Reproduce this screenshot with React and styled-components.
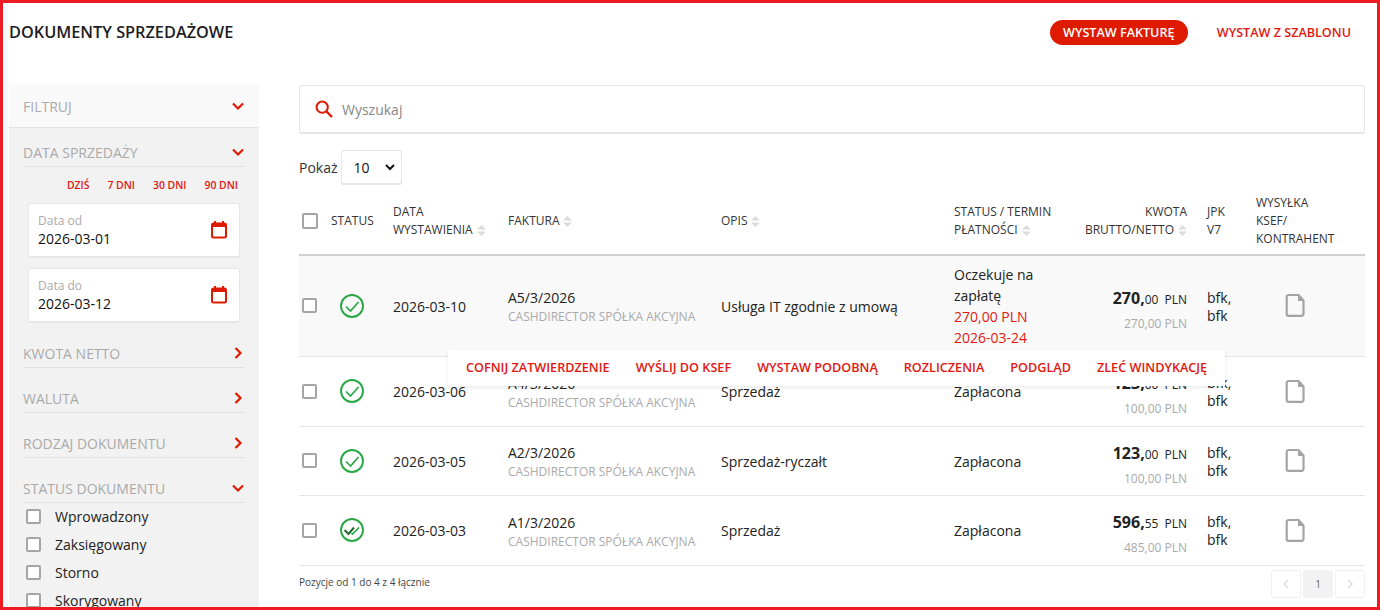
import styled, { createGlobalStyle } from "styled-components";

const RED = "#de1a00";
const TEXT_RED = "#e3170f";

const GlobalStyle = createGlobalStyle`
  html, body {
    margin: 0;
    padding: 0;
    background: #fff;
    overflow: hidden;
  }
  * {
    box-sizing: border-box;
  }
  body {
    font-family: "Open Sans", "Liberation Sans", sans-serif;
    color: #222;
    font-size: 14px;
  }
`;

const Frame = styled.div`
  width: 1380px;
  height: 610px;
  border: 3px solid #ec1c24;
  overflow: hidden;
  background: #fff;
  padding: 0 12px 0 6px;
`;

const TopBar = styled.header`
  height: 82px;
  padding-bottom: 24px;
  display: flex;
  align-items: center;
  justify-content: space-between;
`;

const Title = styled.h1`
  margin: 0;
  font-size: 16.3px;
  font-weight: 600;
  color: #1d1d1f;
  text-transform: uppercase;
`;

const TopActions = styled.div`
  display: flex;
  align-items: center;
  gap: 29px;
  padding-right: 14px;
`;

const PrimaryButton = styled.button`
  height: 25px;
  width: 138px;
  padding: 0;
  border: 0;
  border-radius: 13px;
  background: ${RED};
  color: #fff;
  font: 600 12.6px "Open Sans", sans-serif;
`;

const TextButton = styled.button`
  padding: 0;
  border: 0;
  background: none;
  color: ${TEXT_RED};
  font: 600 12.6px "Open Sans", sans-serif;
`;

const Columns = styled.div`
  display: flex;
  gap: 40px;
  align-items: flex-start;
`;

const Sidebar = styled.aside`
  width: 250px;
  flex: none;
  height: 530px;
  background: #f2f2f2;
`;

const FilterHead = styled.div`
  height: 43px;
  padding: 0 14px;
  background: #f9f9f9;
  border-bottom: 1px solid #e2e2e2;
  display: flex;
  align-items: center;
  justify-content: space-between;
  color: #aaa;
  font-size: 14px;
  font-weight: 400;
`;

const SideBody = styled.div`
  padding: 0 14px;
`;

const SectionHead = styled.div`
  height: 39px;
  margin-top: ${(p) => p.$top}px;
  padding-top: 10px;
  display: flex;
  align-items: center;
  justify-content: space-between;
  border-bottom: 1px solid #e2e2e2;
  color: #aaa;
  font-size: 14px;
`;

const Arrow = styled.svg`
  width: 14px;
  height: 14px;
  fill: none;
  stroke: ${RED};
  stroke-width: 2.2;
  flex: none;
`;

const QuickDates = styled.div`
  display: flex;
  justify-content: flex-end;
  gap: 18px;
  padding: 11px 7px 0 0;
  height: 36px;
  font-size: 10.4px;
  font-weight: 600;
  color: ${TEXT_RED};
`;

const DateList = styled.div`
  display: flex;
  flex-direction: column;
  gap: 10px;
`;

const DateCard = styled.div`
  width: 212px;
  height: 55px;
  margin-left: 5px;
  padding: 8px 11px 8px 9px;
  background: #fff;
  border: 1px solid #e6e6e6;
  border-bottom-width: 2px;
  border-radius: 3px;
  display: flex;
  align-items: center;
  justify-content: space-between;
`;

const DateText = styled.div`
  display: flex;
  flex-direction: column;
  font-size: 14px;
  line-height: 20px;
  color: #111;
  small {
    font-size: 12px;
    line-height: 17px;
    color: #aaa;
  }
`;

const Check = styled.span`
  display: block;
  flex: none;
  width: ${(p) => p.$size || 15}px;
  height: ${(p) => p.$size || 15}px;
  margin-left: ${(p) => p.$inset || 0}px;
  border: 2px solid #a5a5a5;
  border-radius: 2px;
  background: #fff;
`;

const RowCheck = styled(Check)`
  margin-bottom: 2px;
`;

const StatusList = styled.div`
  display: flex;
  flex-direction: column;
  padding-left: 3px;
`;

const StatusItem = styled.label`
  height: 28px;
  padding-bottom: 2px;
  display: flex;
  align-items: center;
  gap: 14px;
  font-size: 14px;
  color: #222;
`;

const Main = styled.main`
  flex: 1;
  min-width: 0;
`;

const SearchBox = styled.div`
  height: 49px;
  display: flex;
  align-items: center;
  gap: 9px;
  padding: 0 15px;
  border: 1px solid #e6e6e6;
  border-bottom-width: 2px;
  border-radius: 3px;
  color: #888;
  font-size: 14px;
`;

const ShowRow = styled.div`
  height: 35px;
  margin-top: 16px;
  display: flex;
  align-items: center;
  gap: 3px;
  font-size: 14px;
  color: #333;
`;

const PageSize = styled.div`
  width: 61px;
  height: 35px;
  padding: 0 6px 0 12px;
  display: flex;
  align-items: center;
  justify-content: space-between;
  border: 1px solid #e6e6e6;
  border-bottom-width: 2px;
  border-radius: 3px;
  color: #111;
`;

const Table = styled.table`
  width: 1066px;
  margin-top: 4px;
  table-layout: fixed;
  border-collapse: collapse;
`;

const Th = styled.th`
  height: 66px;
  padding: 0 ${(p) => (p.$right ? "20px" : "0")} 2px 0;
  border-bottom: 2px solid #cfcfcf;
  font-size: 12px;
  line-height: 18px;
  font-weight: 400;
  color: #333;
  text-align: ${(p) => (p.$right ? "right" : "left")};
  vertical-align: middle;
`;

const Sort = styled.svg`
  display: inline-block;
  width: 9px;
  height: 11px;
  margin-left: 4px;
  vertical-align: -2px;
  fill: #dcdcdc;
`;

const Row = styled.tr`
  background: ${(p) => (p.$active ? "#f9f9f9" : "#fff")};
`;

const Td = styled.td`
  height: ${(p) => p.$height}px;
  padding: 2px ${(p) => (p.$right ? "20px" : "0")} 0 0;
  border-bottom: 1px solid #e6e6e6;
  font-size: 14px;
  line-height: 20px;
  color: #222;
  text-align: ${(p) => (p.$right ? "right" : "left")};
  vertical-align: middle;
`;

const IconCell = styled.div`
  display: flex;
  padding: 0 0 2px ${(p) => p.$inset}px;
`;

const Invoice = styled.div`
  padding-top: 2px;
  line-height: 18px;
  small {
    display: block;
    margin-top: 1px;
    font-size: 12px;
    line-height: 18px;
    color: #aaa;
  }
`;

const StatusText = styled.div`
  padding-bottom: 2px;
  line-height: 21px;
  span {
    display: block;
    color: ${TEXT_RED};
  }
`;

const Amount = styled.div`
  padding-top: 8px;
  font-size: 12px;
  line-height: 18px;
  b {
    font-size: 16px;
    font-weight: 700;
    color: #222;
  }
  em {
    font-style: normal;
    margin-left: 6px;
  }
  small {
    display: block;
    margin-top: 6px;
    font-size: 12px;
    color: #aaa;
  }
`;

const Jpk = styled.div`
  line-height: 18px;
`;

const ActionBar = styled.div`
  position: absolute;
  left: 149px;
  top: 161px;
  width: 777px;
  height: 36px;
  padding: 0 0 2px 18px;
  display: flex;
  align-items: center;
  gap: 26px;
  background: #fff;
  box-shadow: 0 2px 4px rgba(0, 0, 0, 0.08);
  font-size: 12.65px;
  font-weight: 600;
  color: ${TEXT_RED};
  white-space: nowrap;
  z-index: 2;
`;

const TableWrap = styled.div`
  position: relative;
`;

const Footer = styled.div`
  height: 34px;
  padding-top: 2px;
  display: flex;
  align-items: center;
  justify-content: space-between;
  font-size: 10px;
  color: #444;
`;

const FooterNote = styled.span`
  padding-bottom: 4px;
`;

const Pager = styled.div`
  display: flex;
  gap: 2px;
`;

const PageBtn = styled.div`
  width: 30px;
  height: 28px;
  display: flex;
  align-items: center;
  justify-content: center;
  border: 1px solid ${(p) => (p.$current ? "#f2f2f2" : "#f0f0f0")};
  border-radius: 2px;
  background: ${(p) => (p.$current ? "#f2f2f2" : "#fff")};
  color: #666;
  font-size: 10px;
`;

const ChevronDown = () => (
  <Arrow viewBox="0 0 14 14">
    <path d="M2 4.5 7 9.5 12 4.5" />
  </Arrow>
);

const ChevronRight = () => (
  <Arrow viewBox="0 0 14 14">
    <path d="M4.5 2 9.5 7 4.5 12" />
  </Arrow>
);

const SortIcon = () => (
  <Sort viewBox="0 0 9 11">
    <path d="M4.5 0 9 4.5H0ZM0 6.5H9L4.5 11Z" />
  </Sort>
);

const CalendarIcon = () => (
  <svg width="18" height="20" viewBox="0 0 18 20">
    <path d="M5 1v3M13 1v3" stroke={RED} strokeWidth="2" fill="none" />
    <rect x="2" y="3.5" width="14" height="14" rx="1.5" fill="none" stroke={RED} strokeWidth="2" />
    <rect x="2" y="3.5" width="14" height="3.5" fill={RED} />
  </svg>
);

const StatusIcon = ({ double }) => (
  <svg width="24" height="24" viewBox="0 0 24 24" fill="none">
    <circle cx="12" cy="12" r="11" stroke="#27a844" strokeWidth="1.9" />
    {double ? (
      <>
        <path d="M4.5 12 8.5 16 14 9.5" stroke="#1f6b33" strokeWidth="2" />
        <path d="M11.5 15 12.5 16 19 9.5" stroke="#27a844" strokeWidth="1.6" />
      </>
    ) : (
      <path d="M6 12.5 10.5 17 18.5 8" stroke="#27a844" strokeWidth="1.7" />
    )}
  </svg>
);

const FileIcon = () => (
  <svg width="22" height="25" viewBox="0 0 22 25" fill="none">
    <path
      d="M3.5 2h10l5 5.5V21a1.8 1.8 0 0 1-1.8 1.8H3.5A1.8 1.8 0 0 1 1.7 21V3.8A1.8 1.8 0 0 1 3.5 2Z"
      stroke="#a4a4a4"
      strokeWidth="2.2"
    />
    <path d="M13 2v6h6" fill="#a4a4a4" />
  </svg>
);

const SearchIcon = () => (
  <svg width="18" height="18" viewBox="0 0 18 18" fill="none" stroke={RED} strokeWidth="2">
    <circle cx="7.2" cy="7.2" r="5.6" />
    <path d="M11.5 11.5 17 17" strokeWidth="2.4" />
  </svg>
);

const rows = [
  {
    date: "2026-03-10",
    invoice: "A5/3/2026",
    desc: "Usługa IT zgodnie z umową",
    gross: "270,",
    cents: "00",
    net: "270,00 PLN",
    height: 101,
    active: true,
  },
  {
    date: "2026-03-06",
    invoice: "A4/3/2026",
    desc: "Sprzedaż",
    status: "Zapłacona",
    gross: "123,",
    cents: "00",
    net: "100,00 PLN",
    height: 70,
  },
  {
    date: "2026-03-05",
    invoice: "A2/3/2026",
    desc: "Sprzedaż-ryczałt",
    status: "Zapłacona",
    gross: "123,",
    cents: "00",
    net: "100,00 PLN",
    height: 69,
  },
  {
    date: "2026-03-03",
    invoice: "A1/3/2026",
    desc: "Sprzedaż",
    status: "Zapłacona",
    gross: "596,",
    cents: "55",
    net: "485,00 PLN",
    height: 70,
    double: true,
  },
];

const actions = [
  "COFNIJ ZATWIERDZENIE",
  "WYŚLIJ DO KSEF",
  "WYSTAW PODOBNĄ",
  "ROZLICZENIA",
  "PODGLĄD",
  "ZLEĆ WINDYKACJĘ",
];

const App = () => (
  <Frame>
    <GlobalStyle />
    <TopBar>
      <Title>Dokumenty sprzedażowe</Title>
      <TopActions>
        <PrimaryButton>WYSTAW FAKTURĘ</PrimaryButton>
        <TextButton>WYSTAW Z SZABLONU</TextButton>
      </TopActions>
    </TopBar>
    <Columns>
      <Sidebar>
        <FilterHead>
          FILTRUJ <ChevronDown />
        </FilterHead>
        <SideBody>
          <SectionHead $top={0}>
            DATA SPRZEDAŻY <ChevronDown />
          </SectionHead>
          <QuickDates>
            <span>DZIŚ</span>
            <span>7 DNI</span>
            <span>30 DNI</span>
            <span>90 DNI</span>
          </QuickDates>
          <DateList>
            <DateCard>
              <DateText>
                <small>Data od</small>2026-03-01
              </DateText>
              <CalendarIcon />
            </DateCard>
            <DateCard>
              <DateText>
                <small>Data do</small>2026-03-12
              </DateText>
              <CalendarIcon />
            </DateCard>
          </DateList>
          <SectionHead $top={6}>
            KWOTA NETTO <ChevronRight />
          </SectionHead>
          <SectionHead $top={6}>
            WALUTA <ChevronRight />
          </SectionHead>
          <SectionHead $top={6}>
            RODZAJ DOKUMENTU <ChevronRight />
          </SectionHead>
          <SectionHead $top={6}>
            STATUS DOKUMENTU <ChevronDown />
          </SectionHead>
          <StatusList>
            {["Wprowadzony", "Zaksięgowany", "Storno", "Skorygowany"].map((s) => (
              <StatusItem key={s}>
                <Check />
                {s}
              </StatusItem>
            ))}
          </StatusList>
        </SideBody>
      </Sidebar>
      <Main>
        <SearchBox>
          <SearchIcon />
          Wyszukaj
        </SearchBox>
        <ShowRow>
          Pokaż
          <PageSize>
            10
            <svg width="10" height="8" viewBox="0 0 10 8" fill="none" stroke="#111" strokeWidth="2">
              <path d="M1 2 5 6 9 2" />
            </svg>
          </PageSize>
        </ShowRow>
        <TableWrap>
          <Table>
            <colgroup>
              <col width="32" />
              <col width="62" />
              <col width="115" />
              <col width="213" />
              <col width="233" />
              <col width="120" />
              <col width="133" />
              <col width="49" />
              <col width="109" />
            </colgroup>
            <thead>
              <tr>
                <Th>
                  <Check $size={16} $inset={3} />
                </Th>
                <Th>STATUS</Th>
                <Th>
                  DATA
                  <br />
                  WYSTAWIENIA
                  <SortIcon />
                </Th>
                <Th>
                  FAKTURA
                  <SortIcon />
                </Th>
                <Th>
                  OPIS
                  <SortIcon />
                </Th>
                <Th>
                  STATUS / TERMIN
                  <br />
                  PŁATNOŚCI
                  <SortIcon />
                </Th>
                <Th $right>
                  KWOTA
                  <br />
                  BRUTTO/NETTO
                  <SortIcon />
                </Th>
                <Th>
                  JPK
                  <br />
                  V7
                </Th>
                <Th>
                  WYSYŁKA
                  <br />
                  KSEF/
                  <br />
                  KONTRAHENT
                </Th>
              </tr>
            </thead>
            <tbody>
              {rows.map((r) => (
                <Row key={r.date} $active={r.active}>
                  <Td $height={r.height}>
                    <RowCheck $inset={3} />
                  </Td>
                  <Td>
                    <IconCell $inset={9}>
                      <StatusIcon double={r.double} />
                    </IconCell>
                  </Td>
                  <Td>{r.date}</Td>
                  <Td>
                    <Invoice>
                      {r.invoice}
                      <small>CASHDIRECTOR SPÓŁKA AKCYJNA</small>
                    </Invoice>
                  </Td>
                  <Td>{r.desc}</Td>
                  <Td>
                    {r.status || (
                      <StatusText>
                        Oczekuje na zapłatę
                        <span>270,00 PLN</span>
                        <span>2026-03-24</span>
                      </StatusText>
                    )}
                  </Td>
                  <Td $right>
                    <Amount>
                      <b>{r.gross}</b>
                      {r.cents}
                      <em>PLN</em>
                      <small>{r.net}</small>
                    </Amount>
                  </Td>
                  <Td>
                    <Jpk>
                      bfk,
                      <br />
                      bfk
                    </Jpk>
                  </Td>
                  <Td>
                    <IconCell $inset={29}>
                      <FileIcon />
                    </IconCell>
                  </Td>
                </Row>
              ))}
            </tbody>
          </Table>
          <ActionBar>
            {actions.map((a) => (
              <span key={a}>{a}</span>
            ))}
          </ActionBar>
        </TableWrap>
        <Footer>
          <FooterNote>Pozycje od 1 do 4 z 4 łącznie</FooterNote>
          <Pager>
            <PageBtn>
              <svg width="8" height="10" viewBox="0 0 8 10" fill="none" stroke="#dcdcdc" strokeWidth="1.4">
                <path d="M6 1 2 5 6 9" />
              </svg>
            </PageBtn>
            <PageBtn $current>1</PageBtn>
            <PageBtn>
              <svg width="8" height="10" viewBox="0 0 8 10" fill="none" stroke="#dcdcdc" strokeWidth="1.4">
                <path d="M2 1 6 5 2 9" />
              </svg>
            </PageBtn>
          </Pager>
        </Footer>
      </Main>
    </Columns>
  </Frame>
);

export default App;
